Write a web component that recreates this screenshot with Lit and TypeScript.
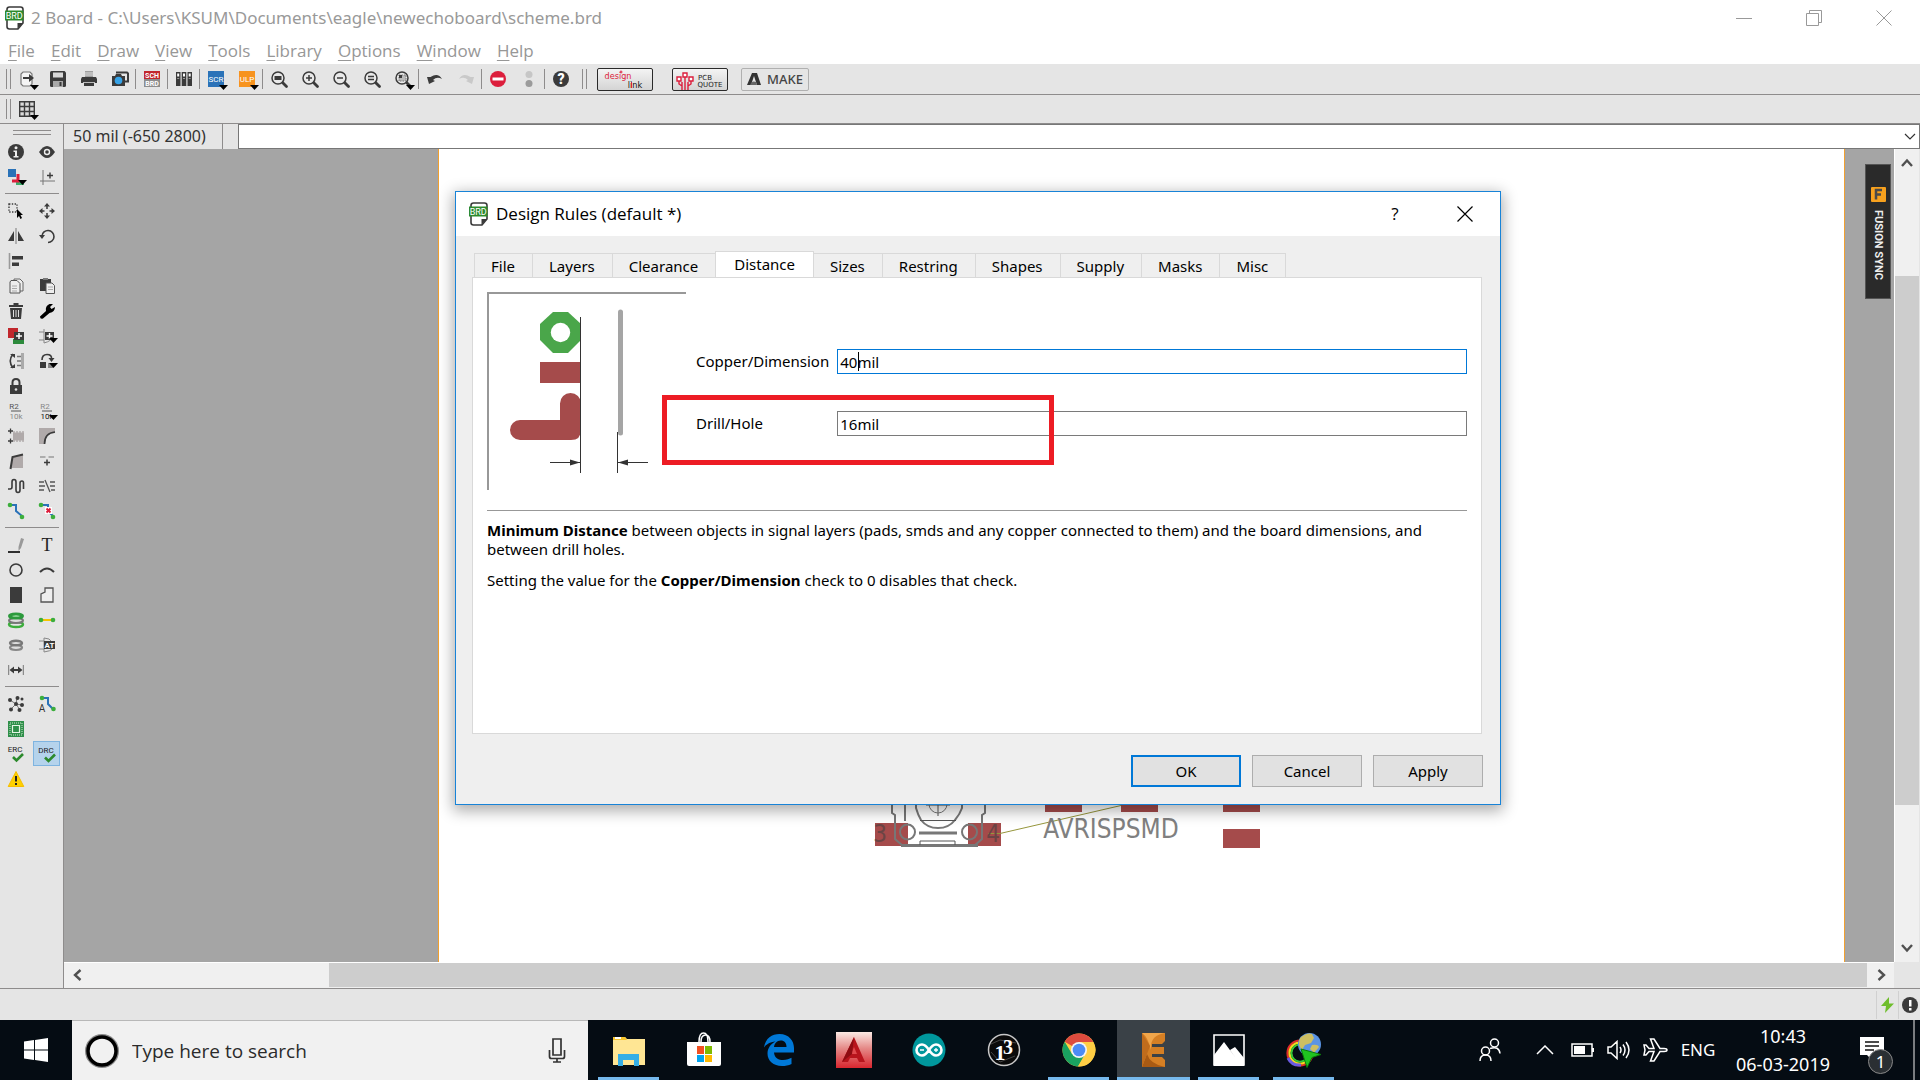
import { LitElement, html, svg, css, SVGTemplateResult } from "lit";
import { customElement, property, state } from "lit/decorators.js";
import { classMap } from "lit/directives/class-map.js";

type Glyph = SVGTemplateResult | SVGTemplateResult[];

const D = "#3b3b3b";
const G = "#9a9a9a";
const RED = "#dc1e3c";
const GREEN = "#3cae3c";
const BLUE = "#2a72b8";

const text = (t: string, x: number, y: number, size: number, fill: string, weight = 400, family = "Roboto, sans-serif") =>
  svg`<text x=${x} y=${y} font-size=${size} fill=${fill} font-weight=${weight} font-family=${family} text-anchor="middle">${t}</text>`;

const drop = svg`<path d="M11 14h9l-4.500 5z" fill="#000"/>`;
const lens = (inner: Glyph) => svg`
  <path d="M11.500 11.500l4 4" stroke=${D} stroke-width="2.800" stroke-linecap="round"/>
  <circle cx="7" cy="7" r="6" fill="#e9e9e9" stroke=${D} stroke-width="1.500"/>${inner}`;

/* Every icon is drawn on a 16 x 16 grid and may spill over its edge. */
const ICONS: Record<string, Glyph> = {
  export: svg`<path d="M4 1h7l2 2v10l-2 2H4l-2-2V3z" fill="#f4f4f4" stroke="#777" stroke-width="1.200"/><path d="M4 6h6V3l5 4-5 4V8H4z" fill=${D}/>${drop}`,
  save: svg`<path d="M0 1.500Q0 0 1.500 0h13L16 1.500v13q0 1.500-1.500 1.500h-13Q0 16 0 14.500z" fill=${D}/><path d="M3 1.500h10v5H3z" fill="#d8d8d8"/><path d="M3 10h10v6H3z" fill="#a9a9a9"/><path d="M9.500 11h2v4h-2z" fill=${D}/>`,
  print: svg`<path d="M4 0h8v6H4z" fill="#9f9f9f"/><path d="M4 2h8M4 4h8" stroke="#ddd"/><path d="M1 6h14l1 2v4H0V8z" fill=${D}/><path d="M3 11h10v4H3z" fill=${D}/><path d="M2 11.500h12" stroke="#bbb"/>`,
  camera: svg`<path d="M4 1.500h11l1 1v8h-3" fill="none" stroke=${D} stroke-width="2"/><path d="M0 5h3l1-2h5l1 2h3v10H0z" fill=${D}/><circle cx="6.500" cy="9.500" r="3.800" fill="#36a3e8"/>`,
  switch: svg`<path d="M0 0h16v8H0z" fill="#c1272d"/><path d="M0 8h16v8H0z" fill="#8d8d8d"/>${text("SCH", 8, 7, 7, "#fff", 700)}${text("BRD", 8, 15, 7, "#fff", 700)}`,
  modules: svg`<path d="M0 1h4.500v14H0zM5.700 1h4.600v14H5.700zM11.500 1H16v14h-4.500z" fill=${D}/><path d="M1.200 2.500h2v3h-2zM7 2.500h2v3H7zM12.700 2.500h2v3h-2z" fill="#fff"/><path d="M1.200 7h2v1h-2zM7 7h2v1H7zM12.700 7h2v1h-2z" fill="#999"/>`,
  scr: svg`<path d="M0 0h16v16H0z" fill=${BLUE}/>${text("SCR", 8, 11, 8, "#fff")}${drop}`,
  ulp: svg`<path d="M0 0h16v16H0z" fill="#f7931e"/>${text("ULP", 8, 11, 8, "#fff")}${drop}`,
  zoomFit: lens(svg`<path d="M3.500 5h7v4h-7z" fill=${D}/>`),
  zoomIn: lens(svg`<path d="M4 7h6M7 4v6" stroke=${D} stroke-width="1.500"/>`),
  zoomOut: lens(svg`<path d="M4 7h6" stroke=${D} stroke-width="1.500"/>`),
  zoomRedraw: lens(svg`<path d="M4 5.500h6M4 8.500h6" stroke=${D} stroke-width="1.300"/>`),
  zoomSelect: svg`${lens(svg`<path d="M4 4h7v6H4z" fill="#bbb" stroke="#777" stroke-dasharray="1.500 1"/><path d="M4 4h3v3H4z" fill=${D}/>`)}<path d="M11 14h9l-4.500 5z" fill="#000"/>`,
  undo: svg`<path d="M0 6l2 7 6-3-2-1q4-4 9-1Q11 1 3.500 6z" fill=${D}/>`,
  redo: svg`<path d="M16 6l-2 7-6-3 2-1Q6 5 1 8q4-7 11.500-2z" fill="#c9c9c9"/>`,
  stop: svg`<circle cx="8" cy="8" r="8" fill=${RED}/><path d="M2.500 6.500h11v3h-11z" fill="#fff"/>`,
  dots: svg`<circle cx="8" cy="3.500" r="3.500" fill="#c6c6c6"/><circle cx="8" cy="12.500" r="3.500" fill="#9b9b9b"/>`,
  help: svg`<circle cx="8" cy="8" r="8" fill=${D}/>${text("?", 8, 13, 14, "#fff", 900)}`,
  grid: svg`<path d="M0 0h16v16H0z" fill="#d9d9d9"/><path d="M.7 0v16M5.500 0v16M10.500 0v16M15.300 0v16M0 .7h16M0 5.500h16M0 10.500h16M0 15.300h16" stroke=${D} stroke-width="1.400"/>${drop}`,
  info: svg`<circle cx="8" cy="8" r="8" fill=${D}/><circle cx="8" cy="3.700" r="1.500" fill="#eee"/><path d="M5.500 6.500H9V12h1.500v1.500h-5V12H7V8H5.500z" fill="#eee"/>`,
  eye: svg`<path d="M0 8q8-12 16 0-8 12-16 0z" fill=${D}/><circle cx="8" cy="8" r="3.200" fill="#eee"/><circle cx="8" cy="8" r="1.800" fill=${D}/>`,
  layers: svg`<path d="M8 12h8v4H8z" fill="#3cae6c"/><path d="M10 5v7H4" fill="none" stroke=${RED} stroke-width="3"/><path d="M0 0h8v8H0z" fill=${BLUE}/><path d="M10 11h9l-4.500 5z" fill="#000"/>`,
  mark: svg`<path d="M4 1v15M1 12h15" stroke="#777" fill="none"/><path d="M8 6.500h6M11 3.500v6" stroke=${D} stroke-width="1.400"/>`,
  group: svg`<path d="M1 1h8v8H1z" fill="none" stroke=${D} stroke-width="1.400" stroke-dasharray="1.400 1.400"/><path d="M9 6v9l2-2 1.500 3 1.500-1-1.500-3H15z" fill="#000"/>`,
  move: svg`<path d="M8 0l3 3.500H5zM8 16l3-3.500H5zM0 8l3.500-3v6zM16 8l-3.500-3v6z" fill=${D}/><path d="M8 3v3M8 10v3M3 8h2.500M10.500 8H13" stroke=${D} stroke-width="1.500"/>`,
  mirror: svg`<path d="M8 0v16" stroke="#999" stroke-width="1.400"/><path d="M6 3v10H0zM10 3v10h6z" fill=${D}/>`,
  rotate: svg`<path d="M3 8a6 6 0 1 1 6 6.500" fill="none" stroke=${D} stroke-width="1.600"/><path d="M0 7h6l-3 4z" fill=${D}/>`,
  align: svg`<path d="M1.500 0v16" stroke=${G} stroke-width="1.600"/><path d="M4 3h11v3.500H4zM4 9.500h7V13H4z" fill=${D}/>`,
  copy: svg`<path d="M6 1h6l3 3v9H6z" fill="#eee" stroke="#666"/><path d="M3 2.500h6l3 3V15H2V4z" fill="#eee" stroke="#555"/><path d="M4 8h5M4 10.500h5M4 13h5" stroke="#aaa"/>`,
  paste: svg`<path d="M1 1h11v12H1z" fill=${D}/><path d="M4 0h5v2H4z" fill="#777"/><path d="M7 5h6l2.500 2.500V15.500H7z" fill="#eee" stroke="#555"/><path d="M9 9h5M9 11.500h5" stroke="#aaa"/>`,
  trash: svg`<path d="M1 2h14v2H1zM5.500 0h5v2h-5zM2 5h12l-1 11H3z" fill=${D}/><path d="M5.500 7v7M8 7v7M10.500 7v7" stroke="#ddd"/>`,
  wrench: svg`<path d="M1 13.500L7 8q-1-5 3.500-7L14 1l-3 3 1.500 2L16 4q0 5-5.500 6L4 15.500Q1 16.500 1 13.500z" fill="#000"/>`,
  addPart: svg`<path d="M0 0h10v10H0z" fill="#c1272d"/><path d="M5 11h11v5H5z" fill="#2c8a3c"/><path d="M6 4h10v8H6z" fill=${D}/><path d="M8 8h6M11 5v6" stroke="#fff" stroke-width="1.500"/>`,
  addGate: svg`<path d="M0 4h5M0 12h5M5 1v14Q13 13 14 8" fill="none" stroke="#888"/><path d="M6 4h9v8H6z" fill=${D}/><path d="M7.500 8h6M10.500 5v6" stroke="#fff" stroke-width="1.400"/><path d="M10 10h9l-4.500 5z" fill="#000"/>`,
  pinswap: svg`<path d="M5 1Q-.5 8 5 15" fill="none" stroke=${D} stroke-width="1.600"/><path d="M2 1h5v4zM2 15h5v-4z" fill=${D}/><path d="M9 3.500h5M9 8h5M9 12.500h5" stroke="#777" stroke-width="1.300"/><path d="M13 0h3v16h-3z" fill="#aaa"/>`,
  replace: svg`<path d="M3 7Q3 1.500 8 1.500T12.500 6" fill="none" stroke=${D} stroke-width="1.600"/><path d="M9.500 5h6l-3 4zM1 9h6v6H1z" fill=${D}/><path d="M9 10h5v5H9z" fill="#888"/><path d="M10 10h9l-4.500 5z" fill="#000"/>`,
  lock: svg`<path d="M4.500 8V4.500q0-3.500 3.500-3.500t3.500 3.500V8" fill="none" stroke=${D} stroke-width="2"/><path d="M2 7h12v9H2z" fill=${D}/><circle cx="8" cy="11.500" r="1.300" fill="#ddd"/>`,
  name: svg`${text("R2", 6, 6, 8, "#555")}<path d="M3 8h10" stroke="#555"/>${text("10k", 8, 16, 8, "#888")}`,
  value: svg`${text("R2", 6, 6, 8, "#888")}<path d="M3 8h10" stroke="#555"/>${text("10k", 8, 16, 8, "#111")}<path d="M10 12h9l-4.500 5z" fill="#000"/>`,
  smash: svg`<path d="M5 4.500h11v8H5z" fill="#b0aaaa"/><path d="M6 3v11M9 3v11M12 3v11M15 3v11" stroke="#b0aaaa" stroke-width="1.400"/><path d="M0 3h5M2.500.5v5M0 13h5M2.500 10.500v5" stroke=${D} stroke-width="1.300"/>`,
  miter: svg`<path d="M0 0h16v5Q6 5 5 16H0z" fill="#b0aaaa"/><path d="M5.500 16Q5.500 5 16 4" fill="none" stroke=${D} stroke-width="1.700"/>`,
  split: svg`<path d="M3 15l2-11 10-2v13z" fill="#b0aaaa"/><path d="M2.500 16L4.500 4 15 1.500" fill="none" stroke=${D} stroke-width="2"/>`,
  optimize: svg`<path d="M1 4h5.500M9.500 4H15" stroke=${G} stroke-width="1.500"/><path d="M5 9.500h6M8 6.500v6" stroke=${D} stroke-width="1.500"/>`,
  meander: svg`<path d="M0 11h2q2 0 2-2V4q0-2.500 2-2.500T8 4v8q0 2.500 2 2.500t2-2.500V5q0-2 2-2h0q1.500 0 1.500 2v6" fill="none" stroke=${D} stroke-width="1.600"/>`,
  ratsLines: svg`<path d="M0 4h5M0 8h6M0 12h5M11 4h5M11 8h5M12 12h4M6 2l5 12" stroke="#555" stroke-width="1.300"/>`,
  route: svg`<path d="M2 2h6v6l6 5" fill="none" stroke=${BLUE} stroke-width="2"/><circle cx="2" cy="2" r="2.300" fill=${GREEN}/><circle cx="14" cy="14" r="2.300" fill=${GREEN}/>`,
  ripup: svg`<path d="M2 2h7v6l5 5" fill="none" stroke=${BLUE} stroke-width="2"/><path d="M6 4h7v7H6z" fill="#fff"/><path d="M7.500 5.500l4 4M11.500 5.500l-4 4" stroke=${RED} stroke-width="2"/><circle cx="2" cy="2" r="2.300" fill=${GREEN}/><circle cx="14" cy="14" r="2.300" fill=${GREEN}/>`,
  wire: svg`<path d="M0 15h12" stroke="#000" stroke-width="1.600"/><path d="M13 1l3 1-3 9-2.500 3V10z" fill="#999"/>`,
  text: text("T", 8, 14, 18, "#222", 400, "Liberation Serif, serif"),
  circle: svg`<circle cx="8" cy="8" r="6" fill="none" stroke=${D} stroke-width="1.600"/>`,
  arc: svg`<path d="M1 10q7-7 14 0" fill="none" stroke=${D} stroke-width="2"/>`,
  rect: svg`<path d="M2 0h12v16H2z" fill=${D}/>`,
  polygon: svg`<path d="M2 15V7l4-2V1h8v14z" fill="#eee" stroke="#555" stroke-width="1.300"/>`,
  via: svg`<ellipse cx="8" cy="12.500" rx="7" ry="2.500" fill="none" stroke=${GREEN} stroke-width="2.400"/><ellipse cx="8" cy="8.500" rx="7" ry="2.500" fill="#ddd" stroke="#777" stroke-width="2"/><ellipse cx="8" cy="4" rx="6.500" ry="2" fill="#dfd" stroke="#2c9a3c" stroke-width="3"/>`,
  signal: svg`<path d="M2 8h12" stroke="#f5c400" stroke-width="2"/><circle cx="2" cy="8" r="2.300" fill=${GREEN}/><circle cx="14" cy="8" r="2.300" fill=${GREEN}/>`,
  hole: svg`<ellipse cx="8" cy="10.500" rx="6" ry="2.500" fill="#ddd" stroke="#888" stroke-width="2.200"/><ellipse cx="8" cy="6" rx="6" ry="2.300" fill="#ddd" stroke="#777" stroke-width="2.400"/>`,
  attribute: svg`<path d="M0 4h5M0 12h5M5 1v14Q12 14 13 12M5 1q6 0 8 4" fill="none" stroke="#888"/><path d="M5 4h11v8H5z" fill=${D}/>${text("AT", 10.5, 11, 8, "#fff", 700)}`,
  dimension: svg`<path d="M.7 3v10M15.300 3v10" stroke="#777"/><path d="M4 8h8" stroke=${D} stroke-width="2"/><path d="M1.500 8L6 4.500v7zM14.500 8L10 4.500v7z" fill=${D}/>`,
  ratsnest: svg`<path d="M8 8L2 4M8 8l1-6M8 8l6 1M8 8l-5 5M8 8l4 6" stroke="#777"/><g fill=${D}><circle cx="8" cy="8" r="2"/><circle cx="2" cy="4" r="2"/><circle cx="9.500" cy="2" r="2"/><circle cx="14" cy="9" r="2"/><circle cx="3" cy="13.500" r="2"/><circle cx="11.500" cy="14" r="2"/><circle cx="14" cy="3" r="1.500"/></g>`,
  autoroute: svg`<path d="M3 2h6v6l5 5" fill="none" stroke=${BLUE} stroke-width="2"/><circle cx="3" cy="2" r="2.300" fill=${GREEN}/><circle cx="14.500" cy="13" r="2.300" fill=${GREEN}/>${text("A", 3, 16, 10, "#333")}`,
  board: svg`<path d="M0 0h16v16H0z" fill="#2f8f4a"/><path d="M2 2h12v12H2z" fill="none" stroke="#cfe8cf" stroke-dasharray="1 1"/><path d="M4.500 4.500h7v7h-7z" fill="none" stroke="#e4f4e4" stroke-width="1.200"/>`,
  erc: svg`${text("ERC", 7, 6, 8, "#222")}<path d="M5 11l3.500 3.500L15 8" fill="none" stroke="#2c8a2c" stroke-width="2.600"/>`,
  drc: svg`${text("DRC", 7, 7, 8, "#222")}<path d="M6 11.500l3.500 3.500L16 8.500" fill="none" stroke="#2c8a2c" stroke-width="2.600"/>`,
  warning: svg`<path d="M8 .5L15.800 15.500H.2z" fill="#ffd000" stroke="#f5bd00" stroke-linejoin="round"/><path d="M7 5h2v5.500H7zM7 12h2v2H7z" fill="#222"/>`,
};

const brdFile = html`<svg class="brd" viewBox="0 0 20 24" width="20" height="24" aria-hidden="true">
  <path d="M2 3.500Q2 1 4.500 1h11Q18 1 18 3.500V17l-5 6H4.500Q2 23 2 20.500z" fill="#fff" stroke="#3a3a3a" stroke-width="1.600"/>
  <path d="M12.500 23v-6H18z" fill="#3a3a3a"/><path d="M0 4.500h18.500v10H0z" fill="#2c8a2c"/>
  ${text("BRD", 9.2, 12.5, 9, "#fff")}</svg>`;

interface Tool { id: string; label: string; }
const tool = (id: string, label: string): Tool => ({ id, label });

const TOOLBAR: (Tool | null)[] = [
  tool("export", "Open"), tool("save", "Save"), tool("print", "Print"), tool("camera", "CAM Processor"), null,
  tool("switch", "Schematic"), null, tool("modules", "Library manager"), null,
  tool("scr", "Run script"), tool("ulp", "Run ULP"), null,
  tool("zoomFit", "Zoom to fit"), tool("zoomIn", "Zoom in"), tool("zoomOut", "Zoom out"), tool("zoomRedraw", "Redraw"), tool("zoomSelect", "Zoom select"), null,
  tool("undo", "Undo"), tool("redo", "Redo"), null, tool("stop", "Cancel command"), tool("dots", "Go"), null, tool("help", "Help"),
];

const PALETTE: (Tool | null)[][] = [
  [tool("info", "Info"), tool("eye", "Show"), tool("layers", "Layer settings"), tool("mark", "Mark")],
  [tool("group", "Group"), tool("move", "Move"), tool("mirror", "Mirror"), tool("rotate", "Rotate"), tool("align", "Align"), null,
   tool("copy", "Copy"), tool("paste", "Paste"), tool("trash", "Delete"), tool("wrench", "Change"), tool("addPart", "Add"), tool("addGate", "Gate"),
   tool("pinswap", "Pinswap"), tool("replace", "Replace"), tool("lock", "Lock"), null, tool("name", "Name"), tool("value", "Value"),
   tool("smash", "Smash"), tool("miter", "Miter"), tool("split", "Split"), tool("optimize", "Optimize"),
   tool("meander", "Meander"), tool("ratsLines", "Slice"), tool("route", "Route"), tool("ripup", "Ripup")],
  [tool("wire", "Line"), tool("text", "Text"), tool("circle", "Circle"), tool("arc", "Arc"), tool("rect", "Rect"), tool("polygon", "Polygon"),
   tool("via", "Via"), tool("signal", "Signal"), tool("hole", "Hole"), tool("attribute", "Attribute"), tool("dimension", "Dimension"), null],
  [tool("ratsnest", "Ratsnest"), tool("autoroute", "Autorouter"), tool("board", "Polygon pour"), null, tool("erc", "ERC"), tool("drc", "DRC"), tool("warning", "Errors"), null],
];

@customElement("tool-icon")
class ToolIcon extends LitElement {
  @property() name = "";
  static styles = css`:host { display: block; width: 16px; height: 16px; } svg { display: block; overflow: visible; }`;
  render() {
    return html`<svg viewBox="0 0 16 16" width="16" height="16" aria-hidden="true">${ICONS[this.name]}</svg>`;
  }
}

const reset = css`
  * { box-sizing: border-box; }
  button { font: inherit; color: inherit; margin: 0; padding: 0; border: 0; background: none; display: flex; align-items: center; justify-content: center; }
  svg { display: block; flex: none; }
`;

@customElement("tool-palette")
class ToolPalette extends LitElement {
  static styles = [reset, css`
    :host { display: block; box-sizing: border-box; background: #e5e5e5; border-right: 1px solid #8e8c8c; width: 64px; flex: none; }
    .grip { height: 5px; margin: 6px 12px 4px 13px; border: solid #8e8c8c; border-width: 1px 0; }
    .group { display: grid; grid-template-columns: 31px 31px; grid-auto-rows: 25px; }
    hr { border: 0; height: 1px; background: #8e8c8c; margin: 4px 4px 4px 5px; }
    button.on { background: #b5d3ec; border: 1px solid #7fb4e0; margin: 0 2px; }
  `];
  render() {
    return html`<div class="grip"></div>${PALETTE.map((g, i) => html`${i ? html`<hr>` : ""}<div class="group">
      ${g.map(t => t ? html`<button aria-label=${t.label} class=${classMap({ on: t.id === "drc" })}><tool-icon name=${t.id}></tool-icon></button>` : html`<span></span>`)}
    </div>`)}`;
  }
}

@customElement("design-rules-dialog")
class DesignRulesDialog extends LitElement {
  @state() private tab = "Distance";
  static styles = [reset, css`
    :host { display: flex; box-sizing: border-box; flex-direction: column; background: #efefef; border: 1px solid #1883d7; box-shadow: 0 4px 14px 2px rgba(0,0,0,.32);
      font: 15px/19px "Noto Sans", sans-serif; color: #000; }
    header { background: #fff; height: 44px; display: flex; align-items: center; padding-left: 13px; font: 17px/24px "Open Sans", sans-serif; }
    h1 { font: inherit; margin: 0 auto 0 7px; }
    header button { width: 70px; height: 44px; }
    .tabs { display: flex; align-items: flex-end; padding: 15px 18px 0; }
    .tabs button { height: 24px; padding: 2px 17px 0 16px; border: 1px solid #d9d9d9; border-width: 1px 1px 0 0; }
    .tabs button:first-child { border-left-width: 1px; }
    .tabs button.on { height: 27px; background: #fff; padding: 0 18px 2px; margin: 0 0 -1px -1px; border-left-width: 1px; }
    .panel { flex: 1; background: #fff; border: 1px solid #d9d9d9; margin: 0 18px 0 16px; padding: 14px; }
    .form { display: flex; padding-bottom: 20px; border-bottom: 1px solid #989898; }
    .fields { flex: 1; display: grid; grid-template-columns: max-content 1fr; gap: 37px 8px; align-content: start; padding: 57px 0 0 9px; }
    .fields label { line-height: 25px; }
    .box { position: relative; display: flex; }
    input { width: 100%; height: 25px; border: 1px solid #7a7a7a; padding: 0 2px; font: inherit; color: #000; background: #fff; outline: 0; }
    input.current { border-color: #0078d7; }
    .caret { position: absolute; left: 21px; top: 3px; width: 1px; height: 19px; background: #000; }
    .mark { position: absolute; left: -175px; top: -16px; width: 392px; height: 70px; border: 5px solid #ed1c24; pointer-events: none; }
    p { margin: 10px 0 0; }
    p + p { margin-top: 12px; }
    footer { display: flex; justify-content: flex-end; gap: 11px; padding: 21px 17px 17px; }
    footer button { width: 110px; height: 32px; background: #e1e1e1; border: 1px solid #adadad; }
    footer button.ok { border: 2px solid #0078d7; }
  `];
  render() {
    const tabs = ["File", "Layers", "Clearance", "Distance", "Sizes", "Restring", "Shapes", "Supply", "Masks", "Misc"];
    return html`
      <header>${brdFile}<h1>Design Rules (default *)</h1>
        <button aria-label="Help">?</button>
        <button aria-label="Close"><svg width="16" height="16" viewBox="0 0 16 16"><path d="M.5.5l15 15M15.500.5l-15 15" stroke="#000" stroke-width="1.200"/></svg></button>
      </header>
      <div class="tabs" role="tablist">${tabs.map(t => html`<button role="tab" aria-selected=${t === this.tab} class=${classMap({ on: t === this.tab })} @click=${() => { this.tab = t; }}>${t}</button>`)}</div>
      <section class="panel">
        <div class="form">
          <svg width="200" height="198" viewBox="0 0 200 198" role="img" aria-label="Distance">
            <path d="M1 198V1h198" fill="none" stroke="#989898" stroke-width="2"/>
            <path d="M66 20h15l13 12v16L81 61H66L53 48V32z" fill="#4aa64a"/><circle cx="73.500" cy="40.500" r="9.700" fill="#fff"/>
            <path d="M53 70h41v21H53zM73 111.500a10.500 10.500 0 0 1 21 0V138q0 10-10 10H33a10 10 0 0 1 0-20h40z" fill="#a54b4b"/>
            <path d="M133.500 20v121" stroke="#a5a5a5" stroke-width="5" stroke-linecap="round"/>
            <path d="M93.500 25v156M130.500 140v41M63 170.500h30M131 170.500h30" stroke="#333" fill="none"/>
            <path d="M93 170.500l-10-3v6zM131 170.500l10-3v6z" fill="#333"/>
          </svg>
          <div class="fields">
            <label for="copper">Copper/Dimension</label>
            <div class="box"><input id="copper" class="current" .value=${"40mil"}><span class="caret"></span></div>
            <label for="drill">Drill/Hole</label>
            <div class="box"><input id="drill" .value=${"16mil"}><span class="mark"></span></div>
          </div>
        </div>
        <p><b>Minimum Distance</b> between objects in signal layers (pads, smds and any copper connected to them) and the board dimensions, and between drill holes.</p>
        <p>Setting the value for the <b>Copper/Dimension</b> check to 0 disables that check.</p>
      </section>
      <footer><button class="ok">OK</button><button>Cancel</button><button>Apply</button></footer>`;
  }
}

const chevron = (d: string) => html`<svg width="14" height="14" viewBox="0 0 14 14" aria-hidden="true"><path d=${d} fill="none" stroke="#505050" stroke-width="2.400"/></svg>`;

@customElement("board-view")
class BoardView extends LitElement {
  static styles = [reset, css`
    :host { flex: 1; display: grid; grid-template: 1fr 26px / 1fr 26px; min-height: 0; }
    .canvas { position: relative; display: flex; background: #a5a5a5; padding: 0 49px 0 374px; overflow: hidden; }
    .sheet { flex: 1; background: #fff; border: solid #f0a030; border-width: 0 1px; }
    .parts { position: absolute; left: 806px; top: 651px; }
    .sync { position: absolute; right: 3px; top: 15px; width: 26px; height: 135px; background: #2a2a2a; border: 1px solid #555; gap: 8px; padding-top: 3px;
      writing-mode: vertical-rl; font: 700 11px/14px Roboto, sans-serif; color: #eee; }
    .vbar, .hbar { display: flex; background: #f0f0f0; }
    .vbar { flex-direction: column; border-left: 1px solid #fff; border-right: 1px solid #e5e5e5; }
    .vbar button { height: 28px; }
    .track { flex: 1; display: flex; }
    .vbar .track { flex-direction: column; }
    .thumb { background: #cdcdcd; }
    .vbar .before { flex: 99; } .vbar .thumb { flex: 529; } .vbar .after { flex: 129; }
    .hbar { border-top: 1px solid #fff; border-bottom: 1px solid #f0f0f0; }
    .hbar button { width: 27px; }
    .hbar .before { flex: 238; } .hbar .thumb { flex: 1538; }
    .corner { background: #e5e5e5; }
  `];
  render() {
    return html`
      <div class="canvas"><div class="sheet"></div>
        <svg class="parts" width="400" height="50" viewBox="870 800 400 50">
          <g fill="#a54b4b"><path d="M1045 800h37v12h-37zM1121 800h37v12h-37zM1223 800h37v12h-37zM1223 829h37v19h-37zM875 823h33v23h-33zM968 823h33v23h-33z"/></g>
          <g fill="none" stroke="#777" stroke-width="2">
            <path d="M892 800v13l3 2v24l8 7M985 800v13l-3 2v24l-8 7M905 800v21M916 800v8q2 7 5 12 6 8 17 8t17-8q5-6 7-12v-8"/>
            <path d="M919 833h38M901 845.500h77" stroke-width="3"/>
            <path d="M920 845v-4h35v4M920 820.500h36M938 800v16M926 805h24" stroke="#555" stroke-width="1"/>
            <circle cx="938" cy="804" r="9" stroke-width="1"/>
            <circle cx="907.500" cy="832" r="7.500"/><circle cx="969.500" cy="832" r="7.500"/>
          </g>
          <path d="M988 833.500h12l121-28" fill="none" stroke="#96963c"/>
          ${text("3", 880, 842, 24, "#6b4444", 400, "DejaVu Sans Condensed, sans-serif")}
          ${text("4", 993, 842, 24, "#6b4444", 400, "DejaVu Sans Condensed, sans-serif")}
          ${text("AVRISPSMD", 1111, 838, 26, "#808080", 400, "DejaVu Sans Condensed, sans-serif")}
        </svg>
        <button class="sync"><svg width="15" height="15" viewBox="0 0 15 15"><rect width="15" height="15" rx="1" fill="#f7a11e"/><path d="M5 12.500V3h6M5 7.500h5" fill="none" stroke="#4a4a4a" stroke-width="2.500"/></svg>FUSION SYNC</button>
      </div>
      <div class="vbar"><button aria-label="Scroll up">${chevron("M2 10l5-5.500 5 5.500")}</button>
        <div class="track"><span class="before"></span><span class="thumb"></span><span class="after"></span></div>
        <button aria-label="Scroll down">${chevron("M2 4l5 5.500L12 4")}</button></div>
      <div class="hbar"><button aria-label="Scroll left">${chevron("M9.500 2L4 7l5.500 5")}</button>
        <div class="track"><span class="before"></span><span class="thumb"></span></div>
        <button aria-label="Scroll right">${chevron("M4.500 2L10 7l-5.500 5")}</button></div>
      <div class="corner"></div>`;
  }
}

const APPS: { label: string; open?: boolean; active?: boolean; art: Glyph }[] = [
  { label: "File Explorer", open: true, art: svg`<path d="M2 5h12l2 2h18v26H2z" fill="#ffe694"/><path d="M2 5h12l2 3H2z" fill="#f7c52d"/><path d="M4 6h6" stroke="#fff" stroke-width="2"/><path d="M7 22h21v12h-5v-6H12v6H7z" fill="#35aee6"/>` },
  { label: "Microsoft Store", art: svg`<path d="M13 10Q13 1 17.500 1T22 10M15 10Q15 3 19.500 3T24 10" fill="none" stroke="#fff" stroke-width="1.500"/><path d="M1 10h34v22q0 2-2 2H3q-2 0-2-2z" fill="#fff"/><path d="M11 14h7v8h-7z" fill="#f25022"/><path d="M19 14h7v8h-7z" fill="#7fba00"/><path d="M11 23h7v7h-7z" fill="#00a4ef"/><path d="M19 23h7v7h-7z" fill="#ffb900"/>` },
  { label: "Edge", art: svg`<path d="M3 15.500C4.500 6 11 2 18.500 2 28 2 33 9 33 16v4.500H13c.5 6 5 7.500 9 7.500 3.500 0 6.500-1 8.500-2.200V32c-3 1.500-6 2-9.500 2-8.500 0-14.500-5-14.500-12.500 0-5 3-9.500 8-12C9 10 5 12.500 3 15.500zM13 15h12.500c0-4-2-6.500-5.800-6.500-4 0-6.200 3-6.700 6.500z" fill="#0078d7"/>` },
  { label: "AutoCAD", art: svg`<defs><linearGradient id="acad" x2="0" y2="1"><stop stop-color="#fbeae4"/><stop offset=".45" stop-color="#e58a88"/><stop offset="1" stop-color="#d9262f"/></linearGradient></defs><path d="M0 0h36v36H0z" fill="url(#acad)"/><path d="M18 5l11 25h-6l-2-4h-7l-2 4H6z" fill="#b8141c"/><path d="M18 15l3 7h-6z" fill="#e0484c"/><path d="M18 5l-2 17-10 8z" fill="#8e0c12"/>` },
  { label: "Arduino", art: svg`<circle cx="18" cy="18" r="16.500" fill="#00979c"/><path d="M18 18c-3.500-5.500-5.500-5.500-7-5.500a5.500 5.500 0 0 0 0 11c1.500 0 3.500 0 7-5.500s5.500-5.500 7-5.500a5.500 5.500 0 0 1 0 11c-1.500 0-3.500 0-7-5.500z" fill="none" stroke="#fff" stroke-width="2.600"/><path d="M9 18h4M23 18h4M25 16v4" stroke="#fff" stroke-width="1.300"/>` },
  { label: "Processing", art: svg`<circle cx="18" cy="18" r="15.500" fill="#0a0a0a" stroke="#c8c8c8" stroke-width="1.500"/><path d="M5 12l9-4 16 3M5 20l9 10 15-6" stroke="#444" fill="none"/>${text("1", 14, 28, 22, "#fff", 700, "Liberation Serif, serif")}${text("3", 22, 22, 20, "#fff", 700, "Liberation Serif, serif")}` },
  { label: "Chrome", open: true, art: svg`<circle cx="18" cy="18" r="16.500" fill="#ffce44"/><path d="M18 18L3.700 9.700A16.500 16.500 0 0 1 32.300 10H18z" fill="#dd4b3e"/><path d="M3.700 9.700A16.500 16.500 0 0 0 17 34.500l7-12.500-6-4-7 4z" fill="#1aa260"/><path d="M18 10h14.300A16.500 16.500 0 0 1 17 34.500l8-13z" fill="#ffce44"/><circle cx="18" cy="18" r="8" fill="#f4f4f4"/><circle cx="18" cy="18" r="6.300" fill="#4c8bf5"/>` },
  { label: "EAGLE", open: true, active: true, art: svg`<path d="M6 1h23v8l-3 3H16v3h12v7H16v3h10l3 3v7H6z" fill="#d57f24"/><path d="M6 1h23q-14 2-14 14v3Q12 5 6 1z" fill="#f0a54a"/><path d="M6 35l5-13q3 10 18 13z" fill="#a85a14"/><path d="M6 1l8 13-3 8-5 13z" fill="#c06c1c"/>` },
  { label: "Photos", open: true, art: svg`<path d="M3 3h30v30H3z" fill="none" stroke="#fff" stroke-width="1.600"/><path d="M3 23l10-13 11 15-5-7 5-3 9 11v8H3z" fill="#fff"/>` },
  { label: "Download Manager", open: true, art: svg`<g fill="none" stroke-width="2.200"><circle cx="14" cy="21" r="12.500" stroke="#e02a2a"/><circle cx="14" cy="21" r="10.500" stroke="#f5d820"/><circle cx="14" cy="21" r="8.500" stroke="#35c435"/><path d="M2 26q4 8 13 7" stroke="#6a5ae0" stroke-width="3"/></g><circle cx="14" cy="21" r="7.400" fill="#050c13"/><circle cx="23.500" cy="12.500" r="11.500" fill="#5a94e4"/><path d="M14 6q7-6 12-4l2 4-3 5-6 2-3 5q-5-5-2-12zM26 13q6-1 7 2l-5 6-4-4z" fill="#cdbf62"/><path d="M15 17l20 5.500-9 3-5 10z" fill="#1fc41f" stroke="#0b7a0b"/>` },
];

@customElement("task-bar")
class TaskBar extends LitElement {
  static styles = [reset, css`
    :host { display: flex; height: 60px; background: #050c13; color: #fff; font: 18px/28px "Noto Sans", sans-serif; flex: none; }
    .start { width: 72px; }
    .search { display: flex; align-items: center; width: 516px; margin-right: 3px; background: #f1f1f1; border-top: 1px solid #b8b8b8; padding: 0 22px 0 13px; gap: 13px; }
    .search input { flex: 1; min-width: 0; border: 0; outline: 0; background: none; padding: 0; font: 19px/28px "Open Sans", sans-serif; color: #222; }
    .search input::placeholder { color: #2b2b2b; opacity: 1; }
    .app { width: 75px; border: solid transparent; border-width: 0 7px; position: relative; background-clip: padding-box; }
    .app.open { background-image: linear-gradient(#76b9ed, #76b9ed); background-size: 100% 3px; background-repeat: no-repeat; background-position: bottom; }
    .app.active { background-color: #3a4147; border-width: 0 1px; }
    .tray { display: flex; align-items: center; margin-left: auto; }
    .tray button { height: 60px; }
    .people { width: 72px; } .up { width: 38px; } .battery { width: 37px; } .sound { width: 36px; } .plane { width: 36px; }
    .lang { width: 50px; font-size: 17px; }
    .clock { flex-direction: column; width: 120px; }
    .notes { width: 70px; padding-left: 9px; position: relative; }
    .badge { position: absolute; left: 25px; top: 29px; width: 25px; height: 25px; border-radius: 50%; background: #2a2f33; border: 1px solid #888; font: 17px/23px "Noto Sans", sans-serif; }
    .desktop { width: 7px; height: 60px; border-left: 2px solid #7a7d80; }
  `];
  render() {
    const line = (w: number, h: number, body: Glyph) => html`<svg width=${w} height=${h} viewBox="0 0 ${w} ${h}" fill="none" stroke="#fff" stroke-width="1.500" aria-hidden="true">${body}</svg>`;
    return html`
      <button class="start" aria-label="Start"><svg width="24" height="24" viewBox="0 0 24 24"><path d="M0 3.500l10-1.400v9.400H0zM11 2l13-2v11.500H11zM0 12.500h10v9.400L0 20.500zM11 12.500h13V24l-13-2z" fill="#fff"/></svg></button>
      <label class="search"><svg width="34" height="34" viewBox="0 0 34 34"><circle cx="17" cy="17" r="15" fill="none" stroke="#888" stroke-width="4"/><circle cx="17" cy="17" r="14" fill="none" stroke="#000" stroke-width="3.500"/></svg>
        <input type="search" placeholder="Type here to search" aria-label="Search">
        <svg width="18" height="25" viewBox="0 0 18 25"><path d="M5 1h8v16H5zM1.500 12v6.500q0 2 2 2h11q2 0 2-2V12M9 20v4M5 24h8" fill="none" stroke="#333" stroke-width="1.700"/></svg></label>
      ${APPS.map(a => html`<button class=${classMap({ app: true, open: !!a.open, active: !!a.active })} aria-label=${a.label}><svg width="36" height="36" viewBox="0 0 36 36">${a.art}</svg></button>`)}
      <div class="tray">
        <button class="people" aria-label="People">${line(22, 24, svg`<circle cx="15.500" cy="5" r="4"/><circle cx="6.500" cy="13" r="4"/><path d="M1 23q0-6 5.500-6t5.500 6M11 10.500q9-3 10 5"/>`)}</button>
        <button class="up" aria-label="Hidden icons">${line(18, 10, svg`<path d="M1 9l8-8 8 8"/>`)}</button>
        <button class="battery" aria-label="Battery">${line(23, 14, svg`<path d="M1 1h20v12H1z"/><path d="M3 3h11v8H3zM21 5h2v4h-2z" fill="#fff" stroke="none"/>`)}</button>
        <button class="sound" aria-label="Volume">${line(24, 20, svg`<path d="M1 7h3l6-5.500v17L4 13H1zM13 7q2 3 0 6M16 4.500q4 5.500 0 11M19 2q6 8 0 16"/>`)}</button>
        <button class="plane" aria-label="Airplane mode">${line(26, 24, svg`<path d="M2 7h2l3 3.500h5L8.500 1H12l6 9.500h4q3 0 3 1.500t-3 1.500h-4L12 23H8.500L12 13.500H7L4 17H2l1-5z"/>`)}</button>
        <button class="lang">ENG</button>
        <button class="clock"><span>10:43</span><span>06-03-2019</span></button>
        <button class="notes" aria-label="Notifications"><svg width="46" height="26" viewBox="0 0 46 26"><path d="M0 0h24v18H13v6l-6-6H0z" fill="#fff"/><path d="M5 5h14M5 9h14M5 13h9" stroke="#111" stroke-width="1.500"/></svg><span class="badge">1</span></button>
        <span class="desktop"></span>
      </div>`;
  }
}

@customElement("app-root")
class AppRoot extends LitElement {
  static styles = [reset, css`
    :host { display: flex; flex-direction: column; min-height: 100vh; position: relative; overflow: hidden; background: #fff; font: 17px/24px "Noto Sans", sans-serif; color: #999; }
    .title { display: flex; align-items: center; height: 35px; padding: 0 1px 0 5px; }
    .title span { margin: 0 auto 0 6px; }
    .title button { width: 70px; height: 35px; }
    nav { display: flex; gap: 16px; padding: 4px 8px 0; font-family: "Open Sans", sans-serif; color: #979797; height: 29px; }
    nav a { color: inherit; text-decoration: none; }
    nav u { text-underline-offset: 3px; text-decoration-thickness: 1px; }
    .bar { display: flex; align-items: center; height: 31px; background: #e5e5e5; border-bottom: 1px solid #8e8c8c; padding-left: 6px; }
    .bar.second { height: 29px; }
    .grip { width: 5px; height: 20px; border: solid #8e8c8c; border-width: 0 1px; }
    .tool + .grip { margin-left: 6px; }
    .bar .tool { width: 31px; height: 28px; }
    .sep { width: 1px; height: 20px; background: #8e8c8c; }
    .bar .link { width: 56px; height: 23px; border: 1px solid #2a2a2a; border-radius: 2px; background: linear-gradient(#f4f4f4, #d4d4d4); margin-left: 19px; }
    .bar .make { width: 68px; border-color: #b0b0b0; background: #e5e5e5; color: #444; font: 500 13px/20px "Noto Sans", sans-serif; gap: 6px; margin-left: 13px; }
    .bar .design { margin-left: 10px; }
    .work { flex: 1; display: flex; min-height: 0; }
    .main { flex: 1; display: flex; flex-direction: column; min-width: 0; }
    .entry { display: flex; height: 25px; background: #e5e5e5; color: #333; font-size: 16px; }
    .coords { width: 159px; padding-left: 9px; border-right: 1px solid #8e8c8c; white-space: nowrap; }
    .combo { flex: 1; margin-left: 15px; display: flex; border: 1px solid #777; background: #fff; }
    .combo input { flex: 1; border: 0; outline: 0; min-width: 0; background: none; }
    .combo button { width: 18px; }
    .status { height: 32px; background: #e5e5e5; border-top: 1px solid #8e8c8c; display: flex; align-items: center; justify-content: flex-end; }
    .status span { border-left: 1px solid #d0d0d0; height: 28px; display: flex; align-items: center; justify-content: center; width: 22px; }
    design-rules-dialog { position: absolute; left: 455px; top: 191px; width: 1046px; min-height: 614px; z-index: 2; }
  `];
  render() {
    const menus = ["File", "Edit", "Draw", "View", "Tools", "Library", "Options", "Window", "Help"];
    const win = (d: string) => html`<svg width="16" height="16" viewBox="0 0 16 16" aria-hidden="true"><path d=${d} fill="none" stroke="#999"/></svg>`;
    const button = (t: Tool) => html`<button class="tool" aria-label=${t.label}><tool-icon name=${t.id}></tool-icon></button>`;
    return html`
      <header class="title">${brdFile}<span>2 Board - C:\\Users\\KSUM\\Documents\\eagle\\newechoboard\\scheme.brd</span>
        <button aria-label="Minimize">${win("M0 8.500h16")}</button>
        <button aria-label="Restore">${win("M.5 3.500h12v12H.5zM3.500 3.500v-3h12v12h-3")}</button>
        <button aria-label="Close">${win("M.5.5l15 15M15.500.5l-15 15")}</button></header>
      <nav>${menus.map(m => html`<a href="#"><u>${m[0]}</u>${m.slice(1)}</a>`)}</nav>
      <div class="bar"><span class="grip"></span>
        ${TOOLBAR.map(t => t ? button(t) : html`<span class="sep"></span>`)}
        <span class="grip"></span>
        <button class="link design" aria-label="Design link"><svg width="54" height="21" viewBox="0 0 54 21">${text("design", 20, 10, 9, RED, 400, "DejaVu Sans Condensed, sans-serif")}${text("link", 37, 19, 9, "#111", 400, "DejaVu Sans Condensed, sans-serif")}<path d="M33.500 13v6" stroke=${RED}/><circle cx="23" cy="3" r="1" fill="none" stroke=${RED}/></svg></button>
        <button class="link" aria-label="PCB quote"><svg width="54" height="21" viewBox="0 0 54 21"><g fill="none" stroke=${RED} stroke-width="1.400"><path d="M6 11v4l3 2v4M12 6v15M18 11v4l-3 2v4M9 13v8M15 13v8"/><path d="M4 8h4v4H4zM10 4h4v4h-4zM16 8h4v4h-4z" fill="#fff"/></g>${text("PCB", 32, 11, 7, "#222", 400, "DejaVu Sans, sans-serif")}${text("QUOTE", 37, 18, 7, "#222", 400, "DejaVu Sans, sans-serif")}</svg></button>
        <button class="link make"><svg width="14" height="14" viewBox="0 0 14 14"><path d="M0 13L5 1h5l4 12h-4L7 4 4 13z" fill="#333"/><path d="M3 13q2-5 6-3l1 3" fill="#666"/></svg>MAKE</button>
      </div>
      <div class="bar second"><span class="grip"></span>${button(tool("grid", "Grid"))}</div>
      <div class="work">
        <tool-palette></tool-palette>
        <div class="main">
          <div class="entry"><span class="coords">50 mil (-650 2800)</span>
            <div class="combo"><input aria-label="Command"><button aria-label="Command history"><svg width="12" height="7" viewBox="0 0 12 7"><path d="M1 1l5 5 5-5" fill="none" stroke="#333" stroke-width="1.200"/></svg></button></div></div>
          <board-view></board-view>
        </div>
      </div>
      <div class="status">
        <span><svg width="14" height="16" viewBox="0 0 14 16"><path d="M8 0L0 9h5l-1 7 9-9.500H8z" fill="#6fbe2c"/></svg></span>
        <span><svg width="16" height="16" viewBox="0 0 16 16"><circle cx="8" cy="8" r="8" fill="#3b3b3b"/><path d="M7 3h2.500v6.500H7zM7 11h2.500v2.500H7z" fill="#fff"/></svg></span>
      </div>
      <task-bar></task-bar>
      <design-rules-dialog></design-rules-dialog>`;
  }
}
